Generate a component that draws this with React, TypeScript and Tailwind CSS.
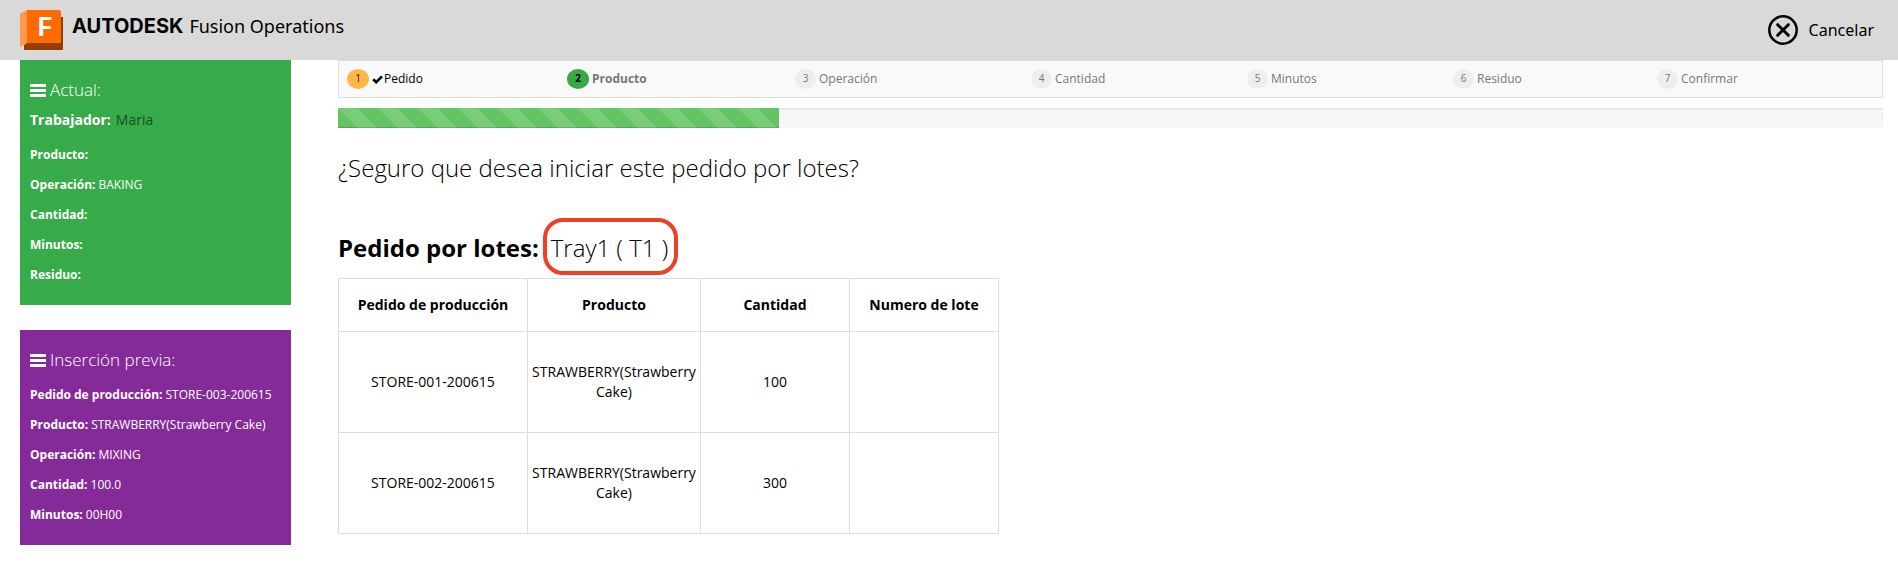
import type { ReactNode } from "react";

type Field = { label: string; value?: string };

const currentFields: Field[] = [
  { label: "Producto:" },
  { label: "Operación:", value: "BAKING" },
  { label: "Cantidad:" },
  { label: "Minutos:" },
  { label: "Residuo:" },
];

const previousFields: Field[] = [
  { label: "Pedido de producción:", value: "STORE-003-200615" },
  { label: "Producto:", value: "STRAWBERRY(Strawberry Cake)" },
  { label: "Operación:", value: "MIXING" },
  { label: "Cantidad:", value: "100.0" },
  { label: "Minutos:", value: "00H00" },
];

const steps = ["Pedido", "Producto", "Operación", "Cantidad", "Minutos", "Residuo", "Confirmar"];
const activeStep = 2;

const orders = [
  { id: "STORE-001-200615", product: "STRAWBERRY(Strawberry Cake)", quantity: "100", lot: "" },
  { id: "STORE-002-200615", product: "STRAWBERRY(Strawberry Cake)", quantity: "300", lot: "" },
];

function FusionLogo() {
  return (
    <svg width="44" height="40" viewBox="0 0 44 40" aria-hidden="true">
      <path d="M4 35 L8 32 H40 V7 H43 V39 Q43 40 42 40 H5 Q4 40 4 39 Z" fill="#933c00" />
      <path d="M0 4 L7 0 V33 L0 37 Z" fill="#ff9a4d" />
      <path d="M7 0 H39 Q41 0 41 2 V33 H7 Z" fill="#ff6b00" />
      <text x="25" y="26" textAnchor="middle" fill="#fff" className="font-['Inter',sans-serif] text-[25px] font-bold">
        F
      </text>
    </svg>
  );
}

function BarsIcon() {
  return (
    <svg width="16" height="13" viewBox="0 0 16 13" fill="currentColor" aria-hidden="true">
      <rect width="16" height="3" rx="0.5" />
      <rect y="5" width="16" height="3" rx="0.5" />
      <rect y="10" width="16" height="3" rx="0.5" />
    </svg>
  );
}

function CheckIcon() {
  return (
    <svg width="12" height="9" viewBox="0 0 12 9" aria-hidden="true">
      <path d="M1.2 4.3 L4.2 7.2 L10 1.4" fill="none" stroke="currentColor" strokeWidth="2.6" />
    </svg>
  );
}

function CancelIcon() {
  return (
    <svg width="30" height="30" viewBox="0 0 30 30" fill="none" stroke="currentColor" aria-hidden="true">
      <circle cx="15" cy="15" r="13.7" strokeWidth="2.5" />
      <path d="M9.7 9.7 L20.3 20.3 M20.3 9.7 L9.7 20.3" strokeWidth="3" strokeLinecap="round" />
    </svg>
  );
}

function PanelTitle({ children }: { children: ReactNode }) {
  return (
    <h2 className="flex h-[30px] items-center gap-1 text-[17px] font-light">
      <BarsIcon />
      {children}
    </h2>
  );
}

function FieldList({ fields }: { fields: Field[] }) {
  return (
    <dl className="text-xs">
      {fields.map((field) => (
        <div key={field.label} className="flex h-[30px] items-center gap-[3px] whitespace-nowrap">
          <dt className="font-bold">{field.label}</dt>
          <dd>{field.value}</dd>
        </div>
      ))}
    </dl>
  );
}

function StepItem({ number, label }: { number: number; label: string }) {
  const done = number < activeStep;
  const active = number === activeStep;
  const badge = done
    ? "w-[22px] bg-[#ffb848] text-[#222]"
    : active
      ? "w-[22px] bg-[#35aa47] text-black"
      : "w-[21px] bg-[#eeeeee] text-[#777]";
  const text = done ? "text-black" : active ? "font-bold text-[#777]" : "text-[#777]";
  return (
    <li className={`flex items-center gap-[3px] text-xs ${text}`} aria-current={active ? "step" : undefined}>
      <span className={`flex h-5 items-center justify-center rounded-[50%] text-[10px] ${badge}`}>{number}</span>
      <span className="flex items-center">
        {done && <CheckIcon />}
        {label}
      </span>
    </li>
  );
}

export default function App() {
  return (
    <div className="bg-white font-['Open_Sans','Noto_Sans',sans-serif] text-black">
      <header className="flex h-[60px] items-center justify-between bg-[#d9d9d9] pr-6 pl-5">
        <div className="flex items-center gap-2">
          <FusionLogo />
          <div className="flex items-baseline gap-[6px] pb-2 leading-6">
            <span className="font-['Inter',sans-serif] text-[20px] font-bold">AUTODESK</span>
            <span className="font-['Noto_Sans',sans-serif] text-lg">Fusion Operations</span>
          </div>
        </div>
        <button type="button" className="flex items-center gap-[11px] font-['Noto_Sans',sans-serif] text-base">
          <CancelIcon />
          Cancelar
        </button>
      </header>

      <div className="flex items-start pr-[15px] pl-5">
        <aside className="flex w-[271px] shrink-0 flex-col gap-[25px] text-white">
          <section className="bg-[#37aa49] px-[10px] pt-[15px] pb-[15px]">
            <PanelTitle>Actual:</PanelTitle>
            <p className="mt-px mb-[6px] flex h-7 items-center gap-[5px] text-sm">
              <strong>Trabajador:</strong>
              <span className="text-[#1d4d25]">Maria</span>
            </p>
            <FieldList fields={currentFields} />
          </section>
          <section className="bg-[#852b99] px-[10px] pt-[15px] pb-[15px]">
            <div className="mb-[5px]">
              <PanelTitle>Inserción previa:</PanelTitle>
            </div>
            <FieldList fields={previousFields} />
          </section>
        </aside>

        <main className="ml-[47px] min-w-0 flex-1">
          <ol className="grid h-[38px] grid-cols-[220fr_228fr_236fr_216fr_206fr_204fr_225fr] items-center border border-[#dddddd] bg-[#f9f9f9] pl-2">
            {steps.map((label, index) => (
              <StepItem key={label} number={index + 1} label={label} />
            ))}
          </ol>

          <div
            role="progressbar"
            aria-label="Progreso"
            aria-valuemin={0}
            aria-valuemax={steps.length}
            aria-valuenow={activeStep}
            className="mt-[10px] h-5 bg-linear-to-b from-[#f5f5f5] to-[#f9f9f9] shadow-[inset_0_1px_2px_rgba(0,0,0,0.1)]"
          >
            <div
              className="h-full bg-[#62c462] bg-[linear-gradient(45deg,rgba(255,255,255,0.15)_25%,transparent_25%,transparent_50%,rgba(255,255,255,0.15)_50%,rgba(255,255,255,0.15)_75%,transparent_75%,transparent)] bg-size-[40px_40px] shadow-[inset_0_-1px_0_rgba(0,0,0,0.15)]"
              style={{ width: `${(activeStep / steps.length) * 100}%` }}
            />
          </div>

          <h1 className="mt-5 text-2xl leading-10 font-light">¿Seguro que desea iniciar este pedido por lotes?</h1>

          <h2 className="mt-10 flex gap-3 text-2xl leading-10 font-light">
            <strong className="font-bold">Pedido por lotes:</strong>
            <span className="relative">
              Tray1 ( T1 )
              <span className="absolute -top-[10px] -right-[10px] -bottom-[7px] -left-2 rounded-[20px] border-4 border-[#ee4027]" />
            </span>
          </h2>

          <table className="mt-[10px] w-[661px] table-fixed border-collapse text-center text-sm">
            <colgroup>
              <col className="w-[189px]" />
              <col className="w-[173px]" />
              <col className="w-[149px]" />
              <col className="w-[149px]" />
            </colgroup>
            <thead>
              <tr className="h-[53px]">
                {["Pedido de producción", "Producto", "Cantidad", "Numero de lote"].map((title) => (
                  <th key={title} scope="col" className="border border-[#dddddd] font-bold">
                    {title}
                  </th>
                ))}
              </tr>
            </thead>
            <tbody>
              {orders.map((order) => (
                <tr key={order.id} className="h-[101px]">
                  <td className="border border-[#dddddd]">{order.id}</td>
                  <td className="border border-[#dddddd]">{order.product}</td>
                  <td className="border border-[#dddddd]">{order.quantity}</td>
                  <td className="border border-[#dddddd]">{order.lot}</td>
                </tr>
              ))}
            </tbody>
          </table>
        </main>
      </div>
    </div>
  );
}
